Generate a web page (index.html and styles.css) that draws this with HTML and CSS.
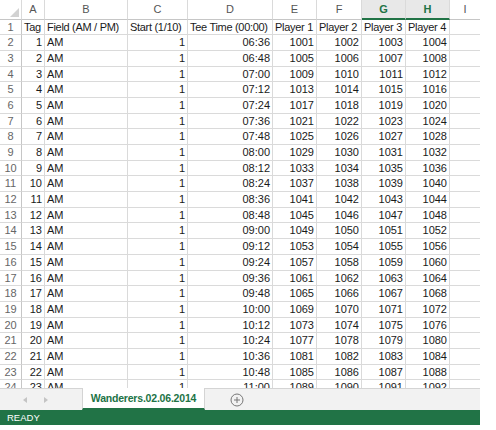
FILE: index.html
```html
<!DOCTYPE html>
<html lang="en">
<head>
  <meta charset="UTF-8">
  <title>Wanderers.02.06.2014 - Excel</title>
  <link rel="stylesheet" href="styles.css">
</head>
<body>
  <div class="window">
    <div class="sheet">
      <div class="row head">
        <div class="corner">
          <svg width="9" height="9" viewBox="0 0 9 9"><polygon points="9,0 9,9 0,9" fill="#d2d2d2"/></svg>
        </div>
        <div>A</div><div>B</div><div>C</div><div>D</div><div>E</div><div>F</div>
        <div class="sel">G</div><div class="sel">H</div><div>I</div>
      </div>
      <div class="row labels">
        <div class="num">1</div><div>Tag</div><div>Field (AM / PM)</div><div>Start (1/10)</div><div>Tee Time (00:00)</div>
        <div>Player 1</div><div>Player 2</div><div>Player 3</div><div>Player 4</div><div></div>
      </div>
      <div id="rows"></div>
    </div>

    <div class="tabs">
      <div class="nav">
        <span class="arrow left"></span>
        <span class="arrow right"></span>
      </div>
      <div class="tab active">Wanderers.02.06.2014</div>
      <div class="add">
        <svg width="14" height="14" viewBox="0 0 14 14">
          <circle cx="7" cy="7" r="6" fill="none" stroke="#777" stroke-width="1"/>
          <path d="M7 4v6M4 7h6" stroke="#777" stroke-width="1"/>
        </svg>
      </div>
      <div class="rest"></div>
    </div>

    <div class="status">READY</div>
  </div>

  <script>
    // Build the tee sheet rows: every 12 minutes from 06:36, four players each
    var rows = document.getElementById('rows');
    for (var n = 1; n <= 23; n++) {
      var mins = 6 * 60 + 36 + (n - 1) * 12;
      var hh = ('0' + Math.floor(mins / 60)).slice(-2);
      var mm = ('0' + (mins % 60)).slice(-2);
      var p = 1001 + (n - 1) * 4;
      var row = document.createElement('div');
      row.className = 'row';
      row.innerHTML =
        '<div class="num">' + (n + 1) + '</div>' +
        '<div class="r">' + n + '</div>' +
        '<div>AM</div>' +
        '<div class="r">1</div>' +
        '<div class="r">' + hh + ':' + mm + '</div>' +
        '<div class="r">' + p + '</div>' +
        '<div class="r">' + (p + 1) + '</div>' +
        '<div class="r">' + (p + 2) + '</div>' +
        '<div class="r">' + (p + 3) + '</div>' +
        '<div></div>';
      rows.appendChild(row);
    }
  </script>
</body>
</html>
```

FILE: styles.css
```css
body {
  margin: 0;
  background: white;
  font-family: "Liberation Sans", Arial, sans-serif;
  font-size: 11px;
  color: #1a1a1a;
}
.window {
  width: 480px;
  height: 426px;
  display: flex;
  flex-direction: column;
}
.sheet {
  height: 388px;
  overflow: hidden;
}
.row {
  display: grid;
  grid-template-columns: 22px 23px 83px 60px 85px 44px 45px 44px 44px 30px;
  height: 15.7px;
}
.row > div {
  box-sizing: border-box;
  border-right: 1px solid #dadada;
  border-bottom: 1px solid #dadada;
  padding: 0 2px;
  line-height: 15px;
  white-space: nowrap;
  overflow: hidden;
}
.row > div:last-child {
  border-right: none;
}
.row .r {
  text-align: right;
}
.row .num {
  text-align: center;
  color: #666;
  padding: 0;
  border-right-color: #c6c6c6;
}
.row.head {
  height: 19.5px;
}
.row.head > div {
  text-align: center;
  color: #555;
  line-height: 18px;
  border-bottom-color: #c6c6c6;
}
.row.head .corner {
  display: flex;
  justify-content: flex-end;
  align-items: flex-end;
  padding: 0 2px 2px 0;
}
.row.head .sel {
  background: #e8e8e8;
  color: #217346;
  font-weight: bold;
  border-bottom: 2px solid #217346;
}
.row.labels > div {
  padding-left: 2px;
  letter-spacing: -0.3px;
}
.row.labels > .num {
  padding-left: 0;
  letter-spacing: 0;
}
.tabs {
  height: 22px;
  display: flex;
  background: #f2f2f2;
}
.nav {
  width: 82px;
  border-top: 1px solid #d4d4d4;
  display: flex;
  align-items: center;
  gap: 17px;
  padding-left: 23px;
  box-sizing: border-box;
}
.arrow {
  width: 0;
  height: 0;
  border-top: 3px solid transparent;
  border-bottom: 3px solid transparent;
}
.arrow.left {
  border-right: 4px solid #c4c4c4;
}
.arrow.right {
  border-left: 4px solid #c4c4c4;
}
.tab {
  width: 123px;
  box-sizing: border-box;
  background: white;
  border-left: 1px solid #d4d4d4;
  border-right: 1px solid #d4d4d4;
  border-bottom: 2px solid #217346;
  color: #217346;
  font-weight: bold;
  font-size: 10.5px;
  letter-spacing: -0.2px;
  text-align: center;
  line-height: 20px;
}
.add {
  width: 64px;
  border-top: 1px solid #d4d4d4;
  display: flex;
  align-items: center;
  justify-content: center;
  box-sizing: border-box;
}
.rest {
  flex: 1;
  border-top: 1px solid #d4d4d4;
}
.status {
  height: 15px;
  background: #217346;
  color: white;
  font-size: 9.5px;
  line-height: 15px;
  padding-left: 7px;
}
```
